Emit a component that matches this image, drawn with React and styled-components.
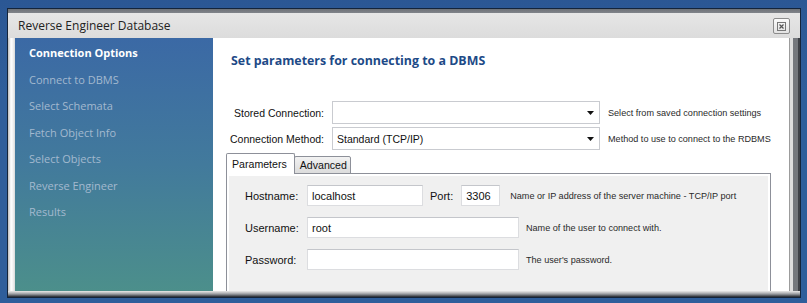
import styled, { createGlobalStyle } from "styled-components";

const Global = createGlobalStyle`
  html, body {
    margin: 0;
    padding: 0;
    background: #2f5e9b;
  }
  * {
    box-sizing: border-box;
  }
`;

const steps = [
  "Connection Options",
  "Connect to DBMS",
  "Select Schemata",
  "Fetch Object Info",
  "Select Objects",
  "Reverse Engineer",
  "Results",
];

const CloseIcon = () => (
  <svg width="9" height="9" viewBox="0 0 9 9">
    <rect x="0.5" y="0.5" width="8" height="8" fill="none" stroke="#777" />
    <path d="M2.5 2.5 L6.5 6.5 M6.5 2.5 L2.5 6.5" stroke="#555" strokeWidth="1.2" />
  </svg>
);

const Arrow = () => (
  <svg width="7" height="4" viewBox="0 0 7 4">
    <path d="M0 0 H7 L3.5 4 Z" fill="#111" />
  </svg>
);

export default function App() {
  return (
    <>
      <Global />
      <Screen>
        <Window>
          <TitleBar>
            <span>Reverse Engineer Database</span>
            <CloseButton>
              <CloseIcon />
            </CloseButton>
          </TitleBar>
          <Body>
            <Sidebar>
              {steps.map((s, i) => (
                <Step key={s} active={i === 0}>
                  {s}
                </Step>
              ))}
            </Sidebar>
            <Content>
              <Heading>Set parameters for connecting to a DBMS</Heading>
              <TopForm>
                <FieldLabel>Stored Connection:</FieldLabel>
                <Combo>
                  <span></span>
                  <Arrow />
                </Combo>
                <Hint>Select from saved connection settings</Hint>
                <FieldLabel>Connection Method:</FieldLabel>
                <Combo>
                  <span>Standard (TCP/IP)</span>
                  <Arrow />
                </Combo>
                <Hint>Method to use to connect to the RDBMS</Hint>
              </TopForm>
              <Tabs>
                <Tab active>Parameters</Tab>
                <Tab>Advanced</Tab>
              </Tabs>
              <Panel>
                <PanelInner>
                  <Row>
                    <RowLabel>Hostname:</RowLabel>
                    <TextBox width={116}>localhost</TextBox>
                    <PortLabel>Port:</PortLabel>
                    <TextBox width={39}>3306</TextBox>
                    <RowHint gap={10}>Name or IP address of the server machine - TCP/IP port</RowHint>
                  </Row>
                  <Row>
                    <RowLabel>Username:</RowLabel>
                    <TextBox width={212}>root</TextBox>
                    <RowHint gap={7}>Name of the user to connect with.</RowHint>
                  </Row>
                  <Row>
                    <RowLabel>Password:</RowLabel>
                    <TextBox width={212}></TextBox>
                    <RowHint gap={7}>The user's password.</RowHint>
                  </Row>
                </PanelInner>
              </Panel>
            </Content>
          </Body>
        </Window>
      </Screen>
    </>
  );
}

const Screen = styled.div`
  width: 807px;
  height: 303px;
  padding: 8px 6px 5px 7px;
  background: linear-gradient(#2b5794, #2f5e9b 30%, #2f5e9b);
  overflow: hidden;
`;

const Window = styled.div`
  height: 100%;
  border: 1px solid #14243a;
  display: flex;
  flex-direction: column;
  background: #d8d8d8;
`;

const TitleBar = styled.div`
  height: 29px;
  flex-shrink: 0;
  display: flex;
  align-items: center;
  justify-content: space-between;
  padding: 4px 10px 0 10px;
  background: linear-gradient(#6e7277 0, #80848a 4px, #e6e6e6 4px, #dcdcdc 100%);
  font-family: "Open Sans", sans-serif;
  font-size: 12px;
  color: #222;
`;

const CloseButton = styled.div`
  width: 17px;
  height: 16px;
  border: 1px solid #8c8c8c;
  border-radius: 2px;
  background: linear-gradient(#fbfbfb, #e2e2e2);
  display: flex;
  align-items: center;
  justify-content: center;
  margin-top: 1px;
`;

const Body = styled.div`
  flex: 1;
  min-height: 0;
  display: flex;
  padding: 0 11px 6px 7px;
  background:
    linear-gradient(to top, #23262c 0, #4a4e55 1px, #9a9da2 3px, #d2d2d2 5px, #e8e8e8 6px) bottom / 100% 6px no-repeat,
    linear-gradient(to right, #9c9c9c 0 1px, #dedede 1px 4px, #75787d 4px 9px, #3e4147 9px) right / 11px 100% no-repeat,
    linear-gradient(to right, #bdbdbd 0, #ffffff 3px, #f2f2f2 5px, #d9d9d9 7px) left / 7px 100% no-repeat,
    #e4e4e4;
`;

const Sidebar = styled.div`
  width: 198px;
  flex-shrink: 0;
  padding: 2px 0 0 14px;
  background: linear-gradient(#3b69a5, #427a9c 50%, #4c8f8b);
  font-family: "Open Sans", sans-serif;
  font-size: 11px;
`;

const Step = styled.div`
  height: 26.5px;
  line-height: 26.5px;
  color: ${({ active }) => (active ? "#ffffff" : "#a3b9cf")};
  font-weight: ${({ active }) => (active ? 700 : 400)};
`;

const Content = styled.div`
  flex: 1;
  background: #ffffff;
  padding: 15px 18px 0 13px;
  overflow: hidden;
  font-family: "Liberation Sans", Arial, sans-serif;
  font-size: 10.5px;
  color: #111;
`;

const Heading = styled.div`
  padding-left: 5px;
  font-family: "Open Sans", sans-serif;
  font-weight: 700;
  font-size: 12.4px;
  line-height: 16px;
  color: #1d4a87;
`;

const TopForm = styled.div`
  margin-top: 32px;
  display: grid;
  grid-template-columns: 98px 268px auto;
  column-gap: 8px;
  row-gap: 3px;
  align-items: center;
`;

const FieldLabel = styled.div`
  text-align: right;
  white-space: nowrap;
`;

const Combo = styled.div`
  height: 23px;
  border: 1px solid #c9cbd0;
  background: #fff;
  display: flex;
  align-items: center;
  justify-content: space-between;
  padding: 0 5px 0 4px;
`;

const Hint = styled.div`
  font-size: 9.1px;
  color: #2a2a2a;
  white-space: nowrap;
`;

const Tabs = styled.div`
  margin-top: 3px;
  display: flex;
  align-items: flex-end;
  height: 21px;
  position: relative;
  z-index: 1;
`;

const Tab = styled.div`
  height: ${({ active }) => (active ? "21px" : "18px")};
  padding: 0 ${({ active }) => (active ? "7px" : "3px")} 0 5px;
  display: flex;
  align-items: center;
  border: 1px solid #8d9099;
  border-bottom: ${({ active }) => (active ? "none" : "1px solid #8d9099")};
  margin-left: ${({ active }) => (active ? "0" : "-1px")};
  background: ${({ active }) => (active ? "#ffffff" : "linear-gradient(#f2f2f2, #dcdcdc)")};
  border-radius: 2px 2px 0 0;
  font-size: 10.6px;
`;

const Panel = styled.div`
  width: 545px;
  height: 140px;
  margin-top: -1px;
  border: 1px solid #8d9099;
  background: #fff;
  padding: 2px 2px 0 2px;
`;

const PanelInner = styled.div`
  height: 100%;
  background: #f0f0f0;
  padding: 9px 0 0 16px;
  display: flex;
  flex-direction: column;
  gap: 11px;
  font-size: 11px;
`;

const Row = styled.div`
  display: flex;
  align-items: center;
`;

const RowLabel = styled.div`
  width: 62px;
`;

const PortLabel = styled.div`
  margin: 0 8px 0 7px;
`;

const TextBox = styled.div`
  width: ${({ width }) => width}px;
  height: 21px;
  border: 1px solid #dcdde0;
  border-top-color: #c4c6cb;
  background: #fff;
  padding: 0 4px;
  display: flex;
  align-items: center;
`;

const RowHint = styled(Hint)`
  margin-left: ${({ gap }) => gap}px;
`;
